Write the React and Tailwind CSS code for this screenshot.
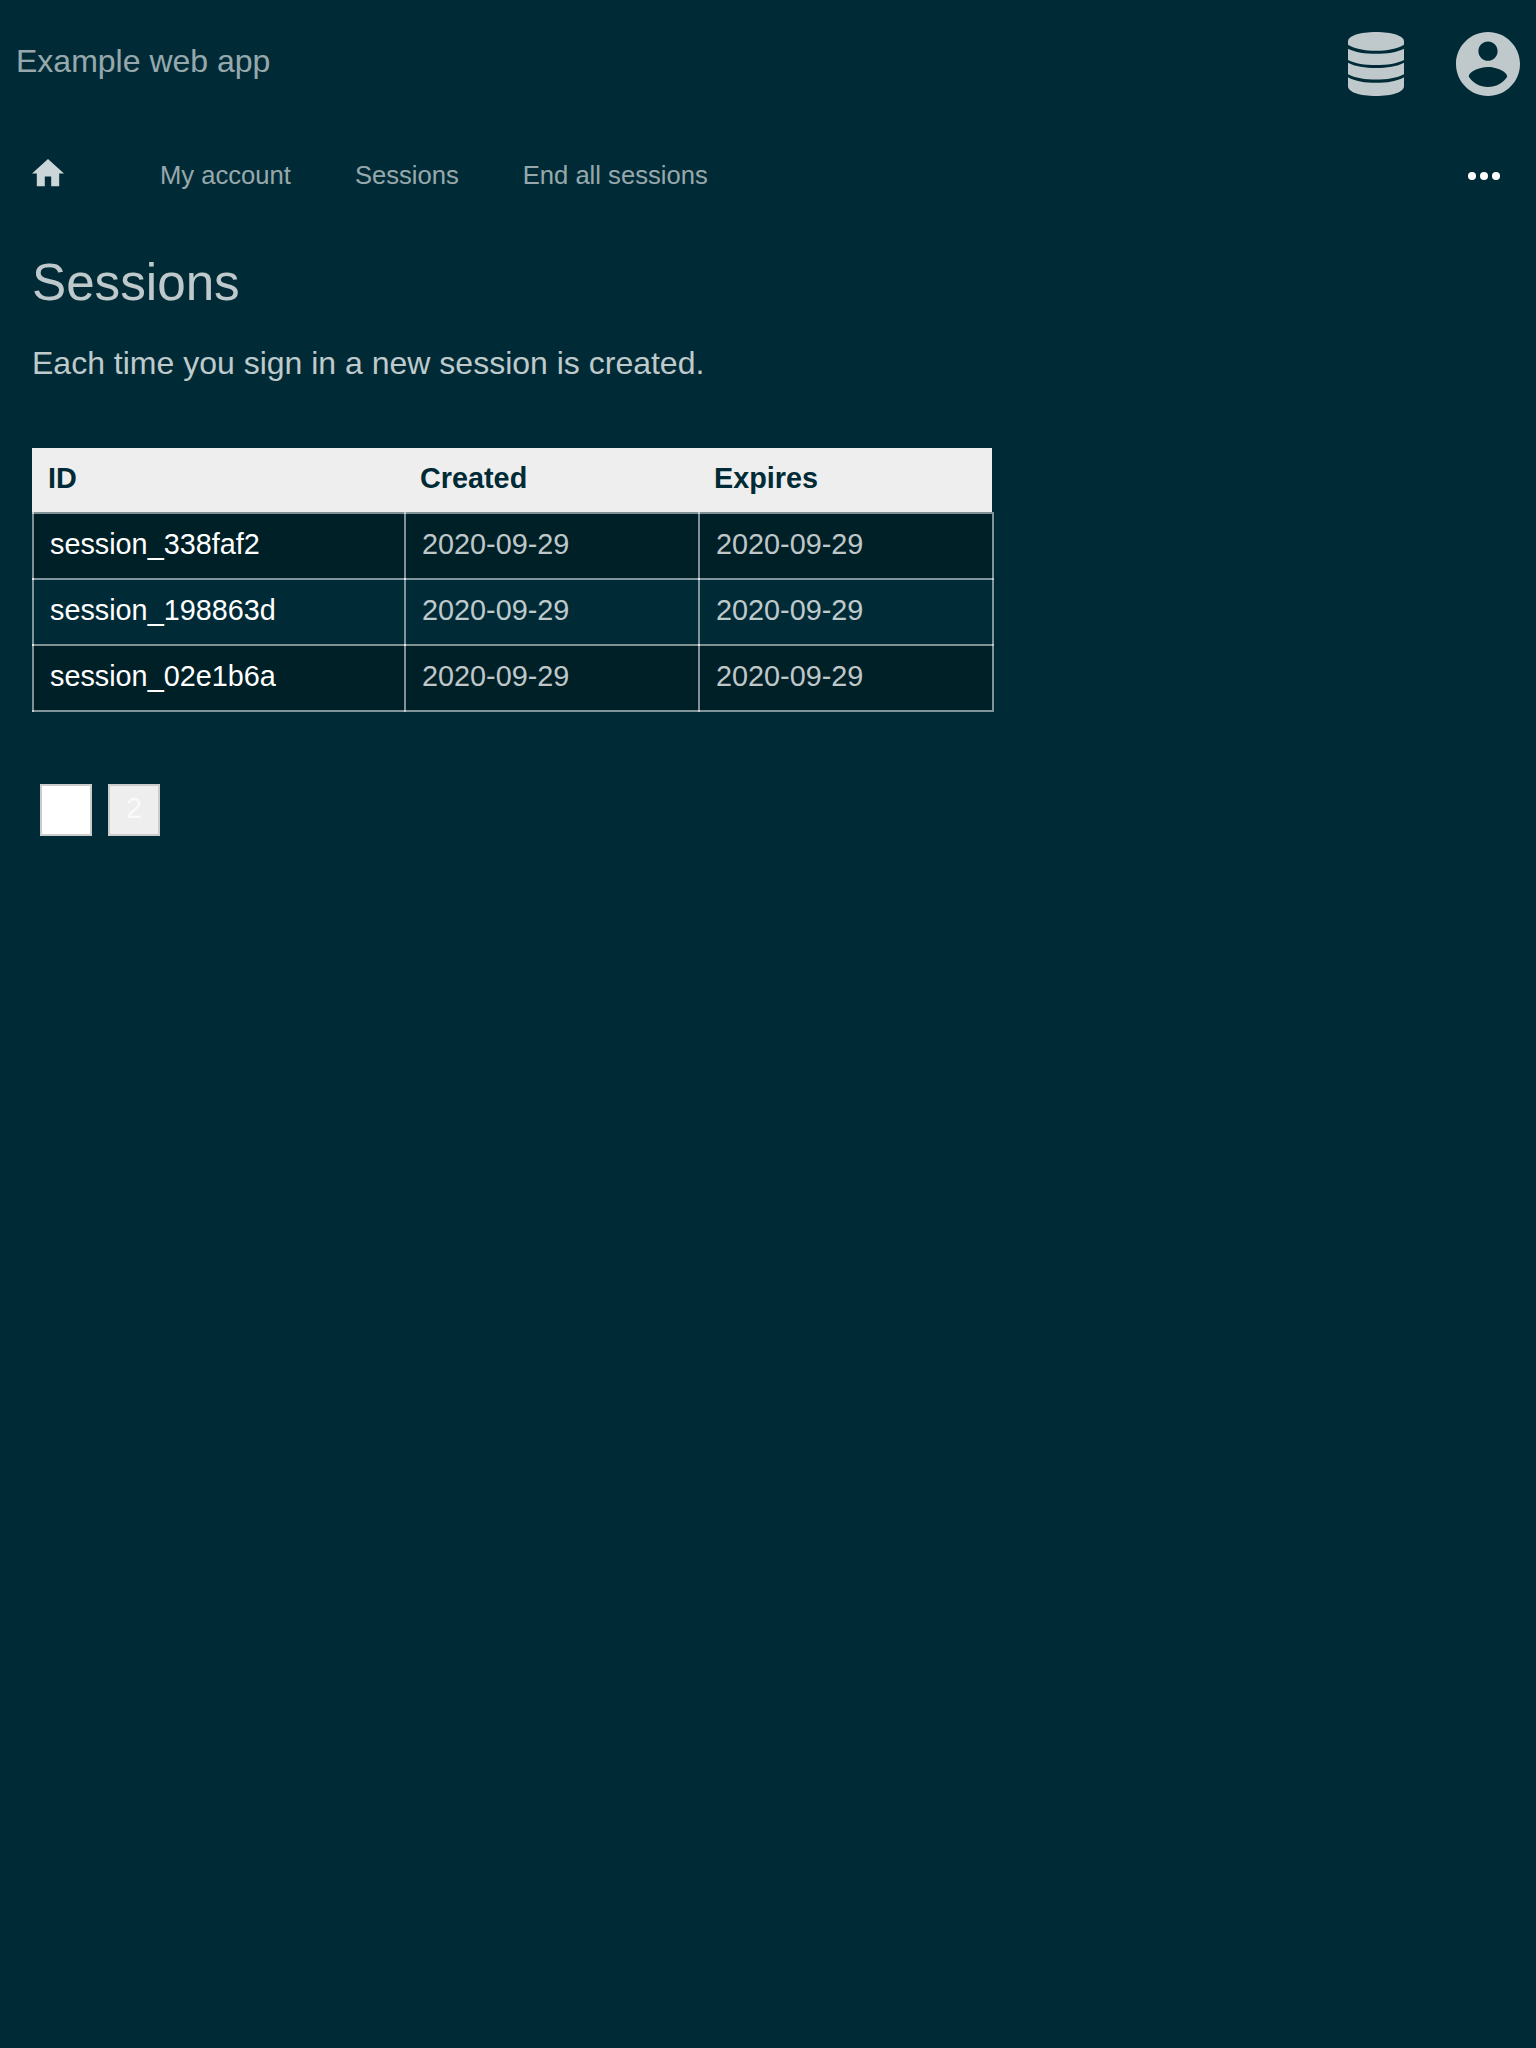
const sessions = ["session_338faf2", "session_198863d", "session_02e1b6a"];

function Database() {
  return (
    <svg className="h-16 w-14" viewBox="0 0 56 64" fill="currentColor">
      <path d="M0 9.3C0 3.8 12 0 28 0S56 3.8 56 9.3V12.7C49 17 39 18.7 28 18.7S7 17 0 12.7Z" />
      <path d="M0 16.7C7 20.4 17 21.8 28 21.8S49 20.4 56 16.7V28C49 31.7 39 33.1 28 33.1S7 31.7 0 28Z" />
      <path d="M0 30.8C7 34.6 17 36 28 36S49 34.6 56 30.8V42.2C49 46 39 47.5 28 47.5S7 46 0 42.2Z" />
      <path d="M0 45.2C7 49.2 17 50.8 28 50.8S49 49.2 56 45.2V54C56 60.2 44 64 28 64S0 60.2 0 54Z" />
    </svg>
  );
}

function Account() {
  return (
    <svg className="size-16" viewBox="2 2 20 20" fill="currentColor">
      <path d="M12 2C6.48 2 2 6.48 2 12s4.48 10 10 10 10-4.48 10-10S17.52 2 12 2zm0 3c1.66 0 3 1.34 3 3s-1.34 3-3 3-3-1.34-3-3 1.34-3 3-3zm0 14.2c-2.5 0-4.71-1.28-6-3.22.03-1.99 4-3.08 6-3.08 1.99 0 5.97 1.09 6 3.08-1.29 1.94-3.5 3.22-6 3.22z" />
    </svg>
  );
}

function Home() {
  return (
    <svg className="-mt-1.5 mr-24 h-[27.2px] w-8 text-white/80" viewBox="2 3 20 17" fill="currentColor">
      <path d="M10 20v-6h4v6h5v-8h3L12 3 2 12h3v8z" />
    </svg>
  );
}

function More() {
  return (
    <svg className="mr-1 ml-auto h-2 w-8" viewBox="0 0 32 8" fill="white">
      <circle cx="4" cy="4" r="4" />
      <circle cx="16" cy="4" r="4" />
      <circle cx="28" cy="4" r="4" />
    </svg>
  );
}

function Cell({ children, className = "", last }) {
  return (
    <div className={"relative h-16.5 border-t-2 border-white/50 pt-3 pl-[18px] " + className}>
      <span className="absolute -top-0.5 -bottom-0.5 left-0 w-0.5 bg-white/50" />
      {last && <span className="absolute -top-0.5 -right-0.5 -bottom-0.5 w-0.5 bg-white/50" />}
      {children}
    </div>
  );
}

export default function App() {
  return (
    <div className="min-h-[2048px] bg-[#002b36] font-['Liberation_Sans',sans-serif] text-[32px] text-white">
      <header className="flex h-32 items-center justify-between px-4">
        <div className="-mt-1.5 text-white/60">Example web app</div>
        <div className="flex items-center gap-13 text-white/75">
          <Database />
          <Account />
        </div>
      </header>
      <nav className="flex h-24 items-center px-8 text-[25.6px] text-white/60">
        <Home />
        <div className="-mt-0.5 flex gap-16">
          <span>My account</span>
          <span>Sessions</span>
          <span>End all sessions</span>
        </div>
        <More />
      </nav>
      <main className="px-8">
        <h1 className="mt-[27px] h-[64px] text-[51.2px] leading-[64px] text-white/75">Sessions</h1>
        <p className="mt-6 leading-[48px] text-white/75">Each time you sign in a new session is created.</p>
        <div className="mt-[61px] w-[960px] text-[28.8px] leading-[36px]">
          <div className="grid h-16 grid-cols-[372px_294px_294px] bg-[#eee] font-bold text-[#002b36]">
            <span className="pt-3 pl-4">ID</span>
            <span className="pt-3 pl-4">Created</span>
            <span className="pt-3 pl-4">Expires</span>
          </div>
          {sessions.map((id, i) => (
            <div key={id} className={"grid grid-cols-[372px_294px_294px] " + (i % 2 ? "" : "bg-black/25")}>
              <Cell>{id}</Cell>
              <Cell className="text-white/75">2020-09-29</Cell>
              <Cell className="text-white/75" last>2020-09-29</Cell>
            </div>
          ))}
          <div className="h-0.5 bg-white/50" />
        </div>
        <div className="mt-[72px] flex gap-4 pl-2 text-[28.8px]">
          <span className="flex size-[52px] items-center justify-center border-2 border-[#ccc] bg-white pb-0.5">1</span>
          <span className="flex size-[52px] items-center justify-center border-2 border-[#ccc] bg-[#eee] pb-0.5 text-white/75">2</span>
        </div>
      </main>
    </div>
  );
}
